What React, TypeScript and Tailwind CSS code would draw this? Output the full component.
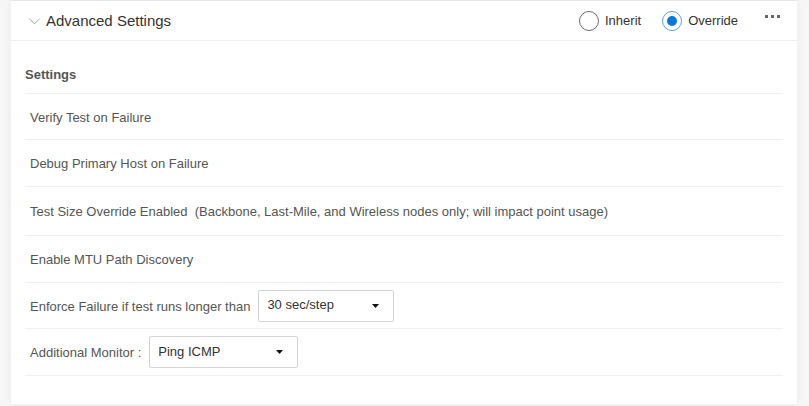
import React from "react"

function Radio({ checked, label }: { checked?: boolean; label: string }) {
  return (
    <label className="flex items-center gap-[6px] cursor-pointer">
      <span
        className={
          checked
            ? "w-[20px] h-[20px] rounded-full border border-[#5aa2e6] flex items-center justify-center bg-white"
            : "w-[20px] h-[20px] rounded-full border border-[#6b6b6b] bg-white"
        }
      >
        {checked && <span className="w-[10px] h-[10px] rounded-full bg-[#0b78d8]" />}
      </span>
      <span className="text-[13px] text-[#333]">{label}</span>
    </label>
  )
}

function Select({ value, width }: { value: string; width: string }) {
  return (
    <div
      className={`${width} h-[32px] border border-[#d4d4d4] rounded-[2px] bg-white flex items-center justify-between pl-[8px] pr-[14px] text-[13px] text-[#333]`}
    >
      <span className="-mt-[1px]">{value}</span>
      <svg width="7" height="4" viewBox="0 0 7 4">
        <path d="M0 0h7L3.5 4z" fill="#111" />
      </svg>
    </div>
  )
}

function Row({ children, h }: { children: React.ReactNode; h: string }) {
  return (
    <div className={`${h} flex items-center pl-[5px] border-b border-[#f0f0f0] text-[13px] text-[#555]`}>
      {children}
    </div>
  )
}

export default function App() {
  return (
    <div
      className="w-[809px] h-[406px] bg-[#f6f6f6] pl-[11px] pr-[12px] overflow-hidden"
      style={{ fontFamily: '"Liberation Sans", Arial, sans-serif' }}
    >
      <div className="bg-white h-[404px] border-t border-[#e8e8e8] shadow-[0_0_6px_rgba(0,0,0,0.06)]">
        <div className="h-[40px] flex items-center border-b border-[#efefef] pl-[18px] pr-[17px]">
          <svg width="11" height="7" viewBox="0 0 11 7" className="mt-[1px]">
            <path d="M0.5 0.8L5.5 5.8L10.5 0.8" fill="none" stroke="#a0a0a0" strokeWidth="1" />
          </svg>
          <span className="ml-[6px] mt-[2px] text-[15px] text-[#333]">Advanced Settings</span>
          <div className="ml-auto flex items-center">
            <Radio label="Inherit" />
            <div className="ml-[21px]">
              <Radio checked label="Override" />
            </div>
            <div className="ml-[27px] flex gap-[3px] -mt-[8px]">
              <span className="w-[3px] h-[3px] bg-[#666]" />
              <span className="w-[3px] h-[3px] bg-[#666]" />
              <span className="w-[3px] h-[3px] bg-[#666]" />
            </div>
          </div>
        </div>
        <div className="pl-[14px] pr-[14px]">
          <div className="h-[53px] flex items-end pb-[9px] border-b border-[#f0f0f0] text-[13px] font-bold text-[#555]">
            Settings
          </div>
          <Row h="h-[46px] pt-[2px]">Verify Test on Failure</Row>
          <Row h="h-[47px] pt-[2px]">Debug Primary Host on Failure</Row>
          <Row h="h-[49px] pt-[2px]">
            Test Size Override Enabled&nbsp; (Backbone, Last-Mile, and Wireless nodes only; will impact point usage)
          </Row>
          <Row h="h-[47px] pt-[2px]">Enable MTU Path Discovery</Row>
          <Row h="h-[46px]">
            <span className="mr-[8px] mt-[2px]">Enforce Failure if test runs longer than</span>
            <Select value="30 sec/step" width="w-[136px]" />
          </Row>
          <Row h="h-[47px]">
            <span className="mr-[8px] mt-[2px]">Additional Monitor :</span>
            <Select value="Ping ICMP" width="w-[149px]" />
          </Row>
        </div>
      </div>
    </div>
  )
}
